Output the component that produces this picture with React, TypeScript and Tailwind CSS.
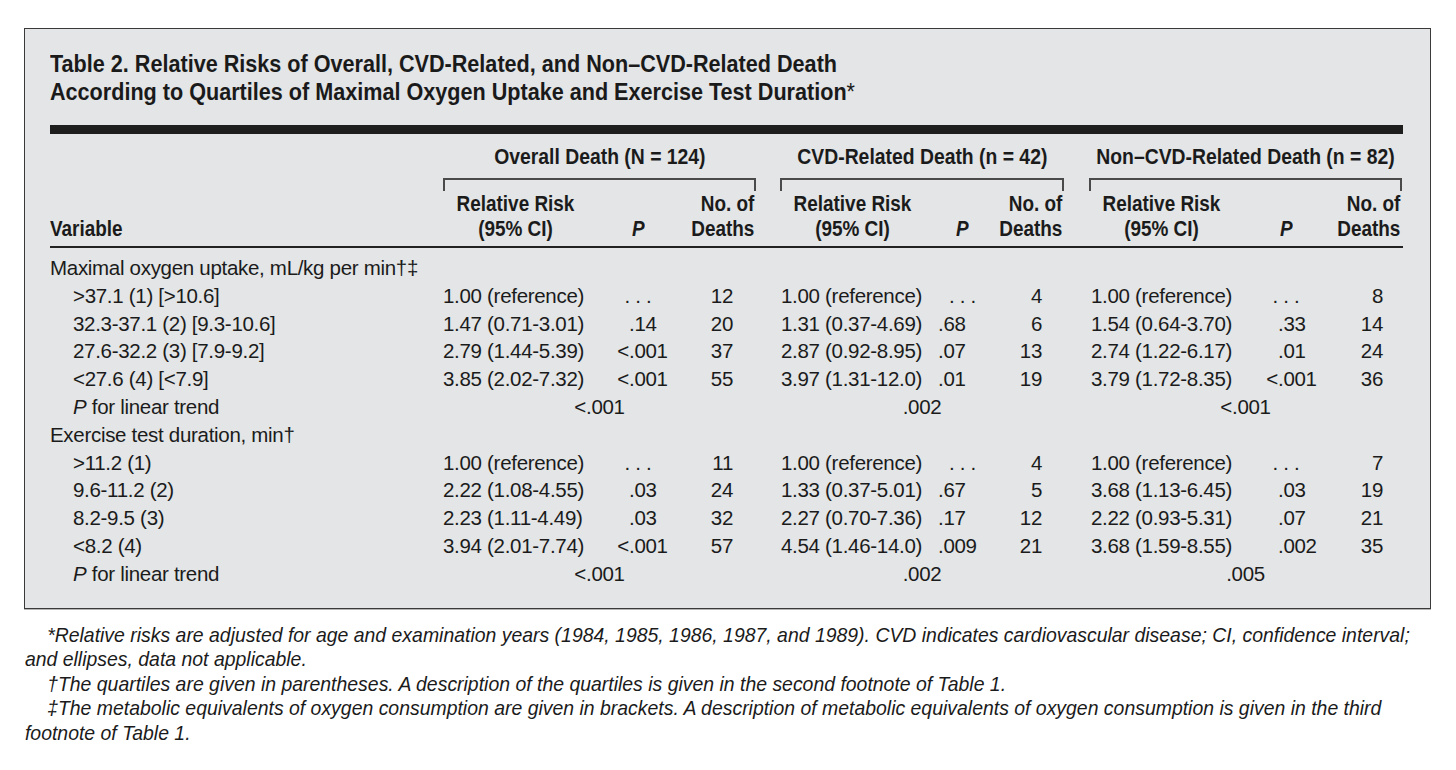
import React from "react";

const GRID =
  "grid grid-cols-[393px_145px_100px_68px_24px_145px_75px_64px_25px_145px_104px_64px]";

type Cell = [string, string, string];
type Row = {
  label: React.ReactNode;
  indent: boolean;
  cells?: Cell[];
  trend?: [string, string, string];
};

const rows: Row[] = [
  { label: "Maximal oxygen uptake, mL/kg per min†‡", indent: false },
  {
    label: ">37.1 (1) [>10.6]",
    indent: true,
    cells: [
      ["1.00 (reference)", "...", "12"],
      ["1.00 (reference)", "...", "4"],
      ["1.00 (reference)", "...", "8"],
    ],
  },
  {
    label: "32.3-37.1 (2) [9.3-10.6]",
    indent: true,
    cells: [
      ["1.47 (0.71-3.01)", ".14", "20"],
      ["1.31 (0.37-4.69)", ".68", "6"],
      ["1.54 (0.64-3.70)", ".33", "14"],
    ],
  },
  {
    label: "27.6-32.2 (3) [7.9-9.2]",
    indent: true,
    cells: [
      ["2.79 (1.44-5.39)", "<.001", "37"],
      ["2.87 (0.92-8.95)", ".07", "13"],
      ["2.74 (1.22-6.17)", ".01", "24"],
    ],
  },
  {
    label: "<27.6 (4) [<7.9]",
    indent: true,
    cells: [
      ["3.85 (2.02-7.32)", "<.001", "55"],
      ["3.97 (1.31-12.0)", ".01", "19"],
      ["3.79 (1.72-8.35)", "<.001", "36"],
    ],
  },
  {
    label: (
      <>
        <span className="italic">P</span> for linear trend
      </>
    ),
    indent: true,
    trend: ["<.001", ".002", "<.001"],
  },
  { label: "Exercise test duration, min†", indent: false },
  {
    label: ">11.2 (1)",
    indent: true,
    cells: [
      ["1.00 (reference)", "...", "11"],
      ["1.00 (reference)", "...", "4"],
      ["1.00 (reference)", "...", "7"],
    ],
  },
  {
    label: "9.6-11.2 (2)",
    indent: true,
    cells: [
      ["2.22 (1.08-4.55)", ".03", "24"],
      ["1.33 (0.37-5.01)", ".67", "5"],
      ["3.68 (1.13-6.45)", ".03", "19"],
    ],
  },
  {
    label: "8.2-9.5 (3)",
    indent: true,
    cells: [
      ["2.23 (1.11-4.49)", ".03", "32"],
      ["2.27 (0.70-7.36)", ".17", "12"],
      ["2.22 (0.93-5.31)", ".07", "21"],
    ],
  },
  {
    label: "<8.2 (4)",
    indent: true,
    cells: [
      ["3.94 (2.01-7.74)", "<.001", "57"],
      ["4.54 (1.46-14.0)", ".009", "21"],
      ["3.68 (1.59-8.55)", ".002", "35"],
    ],
  },
  {
    label: (
      <>
        <span className="italic">P</span> for linear trend
      </>
    ),
    indent: true,
    trend: ["<.001", ".002", ".005"],
  },
];

const LEFTW = ["w-[41px]", "w-[13px]", "w-[44px]"];
const DPR = ["pr-[23px]", "pr-[22px]", "pr-[19px]"];
const RRPL = ["pl-0", "pl-[1px]", "pl-[2px]"];
const TREND_COL = [
  "col-start-2 col-span-3",
  "col-start-6 col-span-3",
  "col-start-10 col-span-3",
];

function PCell({ v, g }: { v: string; g: number }) {
  if (v === "...") {
    return <div className="text-center">. . .</div>;
  }
  const lt = v.startsWith("<");
  return (
    <div className="flex">
      <span className={`${LEFTW[g]} shrink-0 text-right`}>{lt ? "<" : ""}</span>
      <span>{lt ? v.slice(1) : v}</span>
    </div>
  );
}

export default function App() {
  const groups = [
    { title: "Overall Death (N = 124)", col: "col-start-2 col-span-3" },
    { title: "CVD-Related Death (n = 42)", col: "col-start-6 col-span-3" },
    { title: "Non–CVD-Related Death (n = 82)", col: "col-start-10 col-span-3" },
  ];
  const headStarts = [
    ["col-start-2", "col-start-3", "col-start-4"],
    ["col-start-6", "col-start-7", "col-start-8"],
    ["col-start-10", "col-start-11", "col-start-12"],
  ];
  return (
    <div className="bg-white w-[1456px] h-[770px] pt-[28px] pl-[24px] text-[#1b1b1b] font-['Liberation_Sans',Arial,sans-serif]">
      <div className="w-[1407px] border border-[#3a3a3a] bg-[#e3e5e6] pl-[25px] pr-[27px] pt-[21px] pb-[18px] shadow-[0_1px_0_#b5b5b5]">
        <h1 className="font-bold text-[24px] leading-[27.5px] text-[#1a1a1a] whitespace-nowrap scale-x-[0.9] origin-left">
          Table 2. Relative Risks of Overall, CVD-Related, and Non–CVD-Related Death
          <br />
          According to Quartiles of Maximal Oxygen Uptake and Exercise Test Duration
          <span className="font-normal">*</span>
        </h1>
        <div className="mt-[20px] h-[9px] bg-[#1e1e1e]" />

        {/* group titles */}
        <div className={`${GRID} mt-[9px] font-bold text-[22.5px] leading-[28px]`}>
          {groups.map((g) => (
            <div key={g.title} className={`${g.col} flex justify-center`}>
              <span className="inline-block whitespace-nowrap scale-x-[0.86] origin-center">
                {g.title}
              </span>
            </div>
          ))}
        </div>
        {/* brackets */}
        <div className={`${GRID} mt-[7px]`}>
          {groups.map((g) => (
            <div
              key={g.title}
              className={`${g.col} h-[13px] border-t-2 border-x-2 border-[#4a4a4a]`}
            />
          ))}
        </div>
        {/* column headers */}
        <div
          className={`${GRID} font-bold text-[22px] leading-[25px] pb-[5px] border-b-2 border-[#222]`}
        >
          <div className="col-start-1 row-start-1 self-end">
            <span className="inline-block scale-x-[0.86] origin-left">Variable</span>
          </div>
          {headStarts.map((hs, i) => (
            <React.Fragment key={i}>
              <div className={`${hs[0]} row-start-1 flex justify-center`}>
                <span className="inline-block text-center whitespace-nowrap scale-x-[0.86] origin-center">
                  Relative Risk
                  <br />
                  (95% CI)
                </span>
              </div>
              <div className={`${hs[1]} row-start-1 self-end text-center italic`}>
                <span className="inline-block scale-x-[0.86] origin-center">P</span>
              </div>
              <div className={`${hs[2]} row-start-1 flex justify-end pr-[2px]`}>
                <span className="inline-block text-right whitespace-nowrap scale-x-[0.86] origin-right">
                  No. of
                  <br />
                  Deaths
                </span>
              </div>
            </React.Fragment>
          ))}
        </div>

        {/* body */}
        <div className="pt-[6px] pb-[2px] text-[20.5px] leading-[27.8px] tracking-[-0.3px]">
          {rows.map((r, ri) => (
            <div key={ri} className={`${GRID} h-[27.8px]`}>
              <div className={`col-start-1 whitespace-nowrap ${r.indent ? "pl-[23px]" : ""}`}>
                {r.label}
              </div>
              {r.cells &&
                r.cells.map((c, gi) => (
                  <React.Fragment key={gi}>
                    <div className={`${headStarts[gi][0]} ${RRPL[gi]} whitespace-nowrap`}>{c[0]}</div>
                    <div className={headStarts[gi][1]}>
                      <PCell v={c[1]} g={gi} />
                    </div>
                    <div className={`${headStarts[gi][2]} ${DPR[gi]} text-right`}>{c[2]}</div>
                  </React.Fragment>
                ))}
              {r.trend &&
                r.trend.map((t, gi) => (
                  <div key={gi} className={`${TREND_COL[gi]} text-center`}>
                    {t}
                  </div>
                ))}
            </div>
          ))}
        </div>
      </div>

      {/* footnotes */}
      <div className="mt-[14px] pl-[1px] italic text-[21px] leading-[24.5px] text-[#1b1b1b] whitespace-nowrap scale-x-[0.925] origin-left">
        <p className="indent-[24px]">
          *Relative risks are adjusted for age and examination years (1984, 1985, 1986, 1987, and 1989). CVD indicates cardiovascular disease; CI, confidence interval;
          <br />
          and ellipses, data not applicable.
        </p>
        <p className="indent-[24px]">
          †The quartiles are given in parentheses. A description of the quartiles is given in the second footnote of Table 1.
        </p>
        <p className="indent-[24px]">
          ‡The metabolic equivalents of oxygen consumption are given in brackets. A description of metabolic equivalents of oxygen consumption is given in the third
          <br />
          footnote of Table 1.
        </p>
      </div>
    </div>
  );
}
